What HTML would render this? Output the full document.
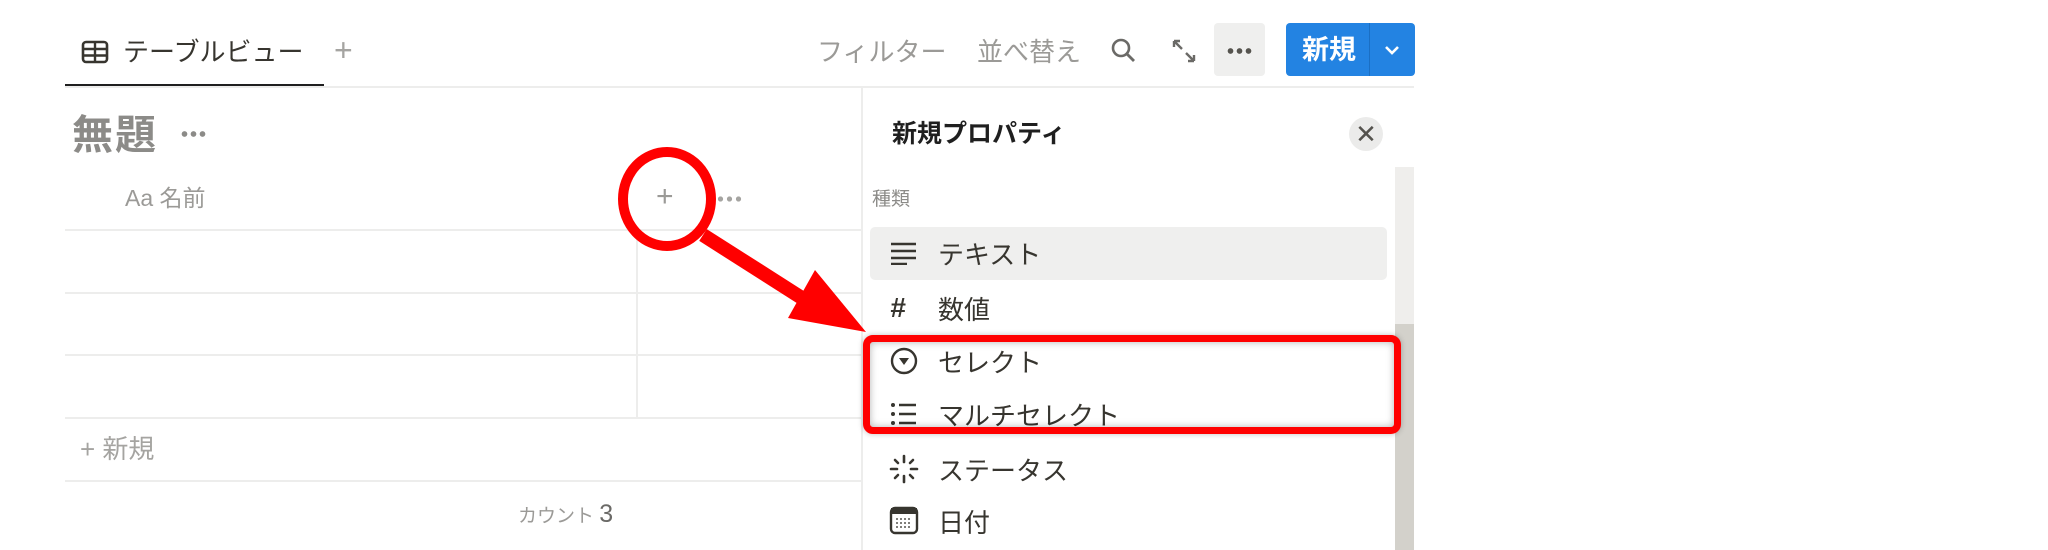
<!DOCTYPE html>
<html><head><meta charset="utf-8"><style>
*{margin:0;padding:0;box-sizing:border-box}
body{width:2048px;height:550px;background:#fff;position:relative;overflow:hidden;font-family:"Liberation Sans","Noto Sans CJK JP",sans-serif;color:#37352f}
.a{position:absolute;white-space:nowrap;line-height:1}
.hl{position:absolute;height:2px;background:#ededec}
</style></head><body>
<svg class="a" style="left:81px;top:40px" width="28" height="24" viewBox="0 0 28 24"><rect x="2" y="2" width="24" height="20" rx="3" fill="none" stroke="#37352f" stroke-width="2.6"/><line x1="2" y1="9" x2="26" y2="9" stroke="#37352f" stroke-width="2.4"/><line x1="2" y1="15.5" x2="26" y2="15.5" stroke="#37352f" stroke-width="2.4"/><line x1="14" y1="2" x2="14" y2="22" stroke="#37352f" stroke-width="2.4"/></svg>
<div class="a" style="left:123px;top:39px;font-size:26px">テーブルビュー</div>
<div class="a" style="left:334px;top:34px;font-size:32px;color:#a5a4a1;font-weight:300">+</div>
<div class="a" style="left:65px;top:84px;width:259px;height:3px;background:#1f1f1f"></div>
<div class="hl" style="left:65px;top:86px;width:1349px"></div>
<div class="a" style="left:817px;top:39px;font-size:26px;color:#9b9a97">フィルター</div>
<div class="a" style="left:977px;top:39px;font-size:26px;color:#9b9a97">並べ替え</div>
<svg class="a" style="left:1110px;top:37px" width="28" height="28" viewBox="0 0 28 28"><circle cx="11" cy="11" r="8" fill="none" stroke="#6b6a67" stroke-width="2.6"/><line x1="17" y1="17" x2="24" y2="24" stroke="#6b6a67" stroke-width="2.8"/></svg>
<svg class="a" style="left:1170px;top:37px" width="28" height="28" viewBox="0 0 28 28"><path d="M4 4 L12 12 M4 4 h6 M4 4 v6 M24 24 L16 16 M24 24 h-6 M24 24 v-6" stroke="#6b6a67" stroke-width="2.4" fill="none"/></svg>
<div class="a" style="left:1214px;top:23px;width:51px;height:53px;background:#efefee;border-radius:4px"></div>
<div class="a" style="left:1226px;top:48px;width:27px;height:6px;background:radial-gradient(circle,#55534e 2.6px,transparent 3px) 0 0/9px 6px"></div>
<div class="a" style="left:1286px;top:23px;width:129px;height:53px;background:#2383e2;border-radius:4px"></div>
<div class="a" style="left:1369px;top:23px;width:1px;height:53px;background:#1a6fc4"></div>
<div class="a" style="left:1302px;top:37px;font-size:27px;color:#fff;font-weight:bold">新規</div>
<svg class="a" style="left:1382px;top:42px" width="20" height="16" viewBox="0 0 20 16"><path d="M4 5 L10 11 L16 5" stroke="#fff" stroke-width="2.6" fill="none"/></svg>
<div class="a" style="left:72px;top:115px;font-size:41px;font-weight:bold;color:#8c8b88;letter-spacing:2px">無題</div>
<div class="a" style="left:180px;top:131px;width:27px;height:6px;background:radial-gradient(circle,#8c8b88 2.6px,transparent 3px) 0 0/9px 6px"></div>
<div class="a" style="left:125px;top:187px;font-size:23px;color:#9b9a97">Aa 名前</div>
<div class="a" style="left:656px;top:182px;font-size:30px;color:#9b9a97;font-weight:300">+</div>
<div class="a" style="left:716px;top:196px;width:27px;height:6px;background:radial-gradient(circle,#a5a4a1 2.4px,transparent 2.8px) 0 0/9px 6px"></div>
<div class="hl" style="left:65px;top:229px;width:797px"></div>
<div class="hl" style="left:65px;top:292px;width:797px"></div>
<div class="hl" style="left:65px;top:354px;width:797px"></div>
<div class="hl" style="left:65px;top:417px;width:797px"></div>
<div class="hl" style="left:65px;top:480px;width:797px"></div>
<div class="a" style="left:636px;top:230px;width:2px;height:188px;background:#ededec"></div>
<div class="a" style="left:80px;top:436px;font-size:26px;color:#a5a4a1">+ 新規</div>
<div class="a" style="left:518px;top:502px;font-size:19px;color:#9b9a97">カウント <span style="font-size:25px;color:#6b6a67">3</span></div>
<div class="a" style="left:861px;top:87px;width:2px;height:463px;background:#ededec"></div>
<div class="a" style="left:892px;top:122px;font-size:25px;font-weight:bold;color:#1f1f1f">新規プロパティ</div>
<div class="a" style="left:1349px;top:117px;width:34px;height:34px;border-radius:50%;background:#ebebea;color:#55534e;font-size:26px;text-align:center;line-height:34px">✕</div>
<div class="a" style="left:1395px;top:167px;width:19px;height:383px;background:#efeeec"></div>
<div class="a" style="left:1395px;top:324px;width:19px;height:226px;background:#d3d1cb"></div>
<div class="a" style="left:872px;top:190px;font-size:19px;color:#8c8b88">種類</div>
<div class="a" style="left:870px;top:227px;width:517px;height:53px;background:#efefee;border-radius:5px"></div>
<svg class="a" style="left:890px;top:241px" width="28" height="24" viewBox="0 0 28 24"><path d="M1 3h25M1 10h25M1 17h25M1 23h16" stroke="#37352f" stroke-width="2.4"/></svg>
<div class="a" style="left:938px;top:242px;font-size:26px">テキスト</div>
<div class="a" style="left:890px;top:294px;font-size:28px;font-weight:bold;font-style:italic">#</div>
<div class="a" style="left:938px;top:297px;font-size:26px">数値</div>
<svg class="a" style="left:889px;top:346px" width="30" height="30" viewBox="0 0 30 30"><circle cx="15" cy="15" r="12" fill="none" stroke="#37352f" stroke-width="2.4"/><path d="M10 12h10l-5 7z" fill="#37352f"/></svg>
<div class="a" style="left:938px;top:350px;font-size:26px">セレクト</div>
<svg class="a" style="left:890px;top:401px" width="28" height="26" viewBox="0 0 28 26"><circle cx="3" cy="4" r="2" fill="#37352f"/><circle cx="3" cy="13" r="2" fill="#37352f"/><circle cx="3" cy="22" r="2" fill="#37352f"/><path d="M9 4h17M9 13h17M9 22h17" stroke="#37352f" stroke-width="2.4"/></svg>
<div class="a" style="left:938px;top:403px;font-size:26px">マルチセレクト</div>
<svg class="a" style="left:889px;top:454px" width="30" height="30" viewBox="0 0 30 30" stroke="#37352f" stroke-width="2.6" stroke-linecap="round"><path d="M15 2v6M15 22v6M2 15h6M22 15h6M6 6l3 3M21 21l3 3M24 6l-3 3M9 21l-3 3"/></svg>
<div class="a" style="left:938px;top:458px;font-size:26px">ステータス</div>
<svg class="a" style="left:889px;top:506px" width="30" height="30" viewBox="0 0 30 30"><rect x="2" y="2" width="26" height="25" rx="4" fill="none" stroke="#37352f" stroke-width="2.4"/><rect x="2" y="2" width="26" height="6" fill="#37352f"/><path d="M7 13h16M7 17h16M7 21h16" stroke="#55534e" stroke-width="1.5" stroke-dasharray="2 2"/></svg>
<div class="a" style="left:938px;top:510px;font-size:26px">日付</div>
<div class="a" style="left:863px;top:335px;width:538px;height:99px;border:7px solid #ff0000;border-radius:10px;box-shadow:inset 0 0 8px rgba(0,0,0,.3),0 0 6px rgba(0,0,0,.25)"></div>
<svg class="a" style="left:0;top:0" width="2048" height="550"><ellipse cx="667" cy="199" rx="44" ry="47" fill="none" stroke="#ff0000" stroke-width="10"/><line x1="703" y1="235" x2="805" y2="300" stroke="#ff0000" stroke-width="14"/><path d="M788 318 L815 270 L866 332 Z" fill="#ff0000"/></svg>
</body></html>
